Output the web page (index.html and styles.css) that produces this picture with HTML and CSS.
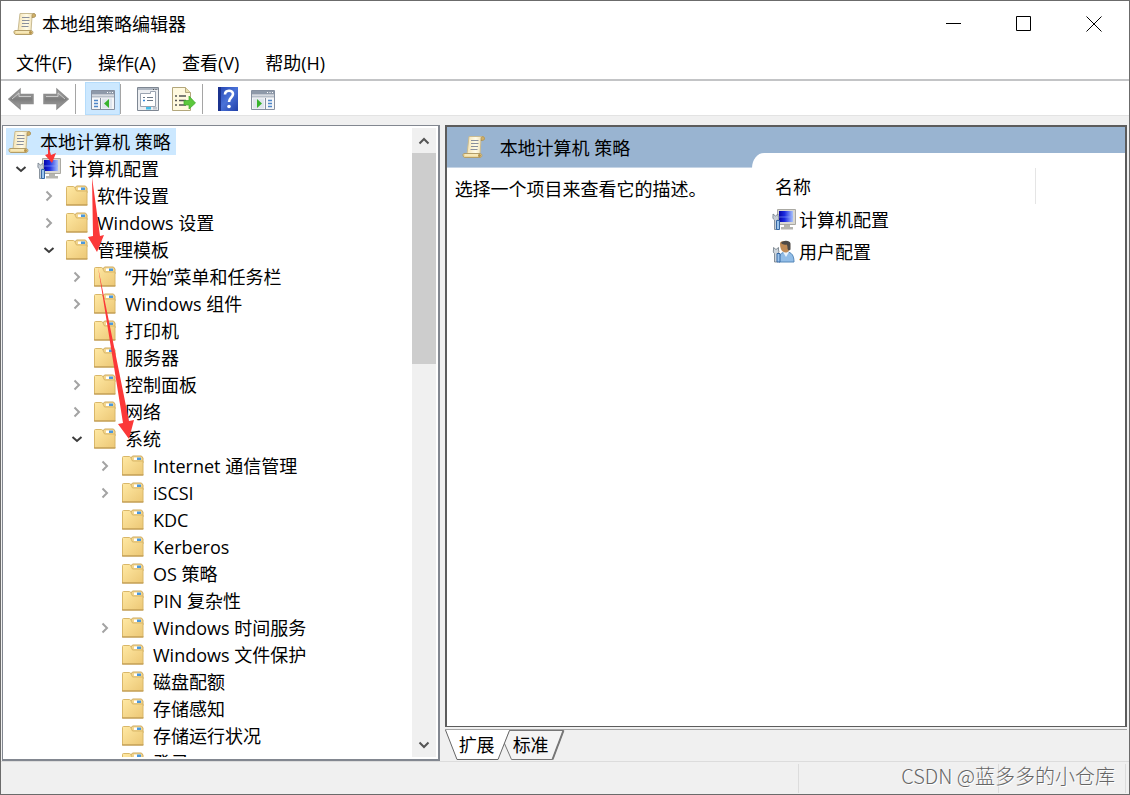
FILE: index.html
```html
<!DOCTYPE html>
<html lang="zh-CN">
<head>
<meta charset="utf-8">
<title>本地组策略编辑器</title>
<link rel="stylesheet" href="styles.css">
</head>
<body>

<svg class="defs" width="0" height="0" aria-hidden="true">
  <defs>
    <linearGradient id="gFolder" x1="0" y1="0" x2="1" y2="1">
      <stop offset="0" stop-color="#ffe9a4"/><stop offset="1" stop-color="#ecc775"/>
    </linearGradient>
    <linearGradient id="gPaper" x1="0" y1="0" x2="1" y2="0">
      <stop offset="0" stop-color="#f4e3b4"/><stop offset=".5" stop-color="#fffbe8"/><stop offset="1" stop-color="#ead49b"/>
    </linearGradient>
    <linearGradient id="gScreen" x1="0" y1="0" x2="1" y2="0">
      <stop offset="0" stop-color="#0505a8"/><stop offset=".4" stop-color="#1c2be0"/><stop offset="1" stop-color="#a9c3fb"/>
    </linearGradient>
    <linearGradient id="gArrow" x1="0" y1="0" x2="0" y2="1">
      <stop offset="0" stop-color="#b5b5b5"/><stop offset=".5" stop-color="#7c7c7c"/><stop offset="1" stop-color="#a5a5a5"/>
    </linearGradient>
    <linearGradient id="gHelp" x1="0" y1="0" x2="1" y2="1">
      <stop offset="0" stop-color="#2343b0"/><stop offset=".5" stop-color="#4a72d8"/><stop offset="1" stop-color="#2140a8"/>
    </linearGradient>
  </defs>
  <symbol id="folder" viewBox="0 0 24 24">
    <path d="M9.500 7.500v-3l2-2.500h9l1.500 2v5H9.500z" fill="#f3d68e" stroke="#cfab61"/>
    <path d="M13 3.500h7v2.500h-7z" fill="#fff"/>
    <path d="M16 3.500h4v2.500h-4z" fill="#4b98dc"/>
    <path d="M1.500 3.500q0-1 1-1h6q1 0 1.500 1.500l1.500 3h10.500v14h-20.500z" fill="url(#gFolder)" stroke="#d9b769"/>
    <path d="M1 21h21.500" stroke="#b8924a"/>
  </symbol>
  <symbol id="scroll" viewBox="0 0 24 24">
    <path d="M7 1.500h14c2 0 2 3.500 0 3.500h-2l-1 14H5z" fill="url(#gPaper)" stroke="#c9bb92"/>
    <path d="M19 5.500V3.500c0-2.500 3.500-2.500 3.500 0 0 1.500-1 2-3.500 2z" fill="#d1b066" stroke="#9d8654" stroke-width=".7"/>
    <path d="M9 5.500h7.500M9 8.500h7.500M9 11.500h7M8.500 14.500h7" stroke="#8a8f9c" stroke-width="1.200"/>
    <path d="M2 18.500h16c2.500 0 2.500 4 0 4H3c-2.500 0-2.500-4-1-4z" fill="#eed99d" stroke="#b39d68"/>
    <path d="M3 20h13" stroke="#fff6d2"/>
    <circle cx="17.500" cy="20.500" r="1.500" fill="#b6924a"/>
  </symbol>
  <symbol id="computer" viewBox="0 0 24 24">
    <path d="M5.500 1.500h18v15h-18z" fill="#d9d8d2" stroke="#aaa9a3"/>
    <path d="M7 3h14v11H7z" fill="url(#gScreen)"/>
    <path d="M7 9h14" stroke="#8fa8ff" stroke-width=".6"/>
    <path d="M12 17h6v2h3v2.500H9V19h3z" fill="#b5b5af"/>
    <path d="M1 8v-2l2.500 2L6 6v2c1.500 2 .5 4-.5 4v9.500h-3V12C1 11 .5 9.500 1 8z" fill="#c7ced6" stroke="#727d8a" stroke-width=".8"/>
    <path d="M4.500 12.500h3v9h-3z" fill="#9cc4ec" stroke="#3768a4"/>
  </symbol>
  <symbol id="user" viewBox="0 0 24 24">
    <path d="M7 22c-.5-7 2-10 7.500-10S22 16 22 22z" fill="#92bde7" stroke="#5587b8"/>
    <path d="M11 12l3 5 3-5z" fill="#e9f3fd"/>
    <path d="M8 3c0-2 8-3 9.500 0 1.500 4 0 9-3 9.500C10 13 8 9 8 3z" fill="#c08a55"/>
    <path d="M9 3c1-3 9-3.500 9.500.5V9.500c-1.500 1.500-2.500 1-3-1 0-2 0-3-1-4-2 .5-4 0-5.500-1.500z" fill="#4f4a47"/>
    <path d="M1.500 10V7.500L4 9.500l2.500-2V10c1 2 0 3-1 3.500V22h-3v-8.500c-1-.5-1.500-2-1-3.500z" fill="#ced5dc" stroke="#6d7883" stroke-width=".8"/>
    <path d="M5 13.500h3V22H5z" fill="#9cc4ec" stroke="#3768a4"/>
  </symbol>
  <symbol id="right" viewBox="0 0 12 12"><path d="M3.500 1.500L8 6l-4.500 4.500" fill="none" stroke="#a3a3a3" stroke-width="2"/></symbol>
  <symbol id="down" viewBox="0 0 12 12"><path d="M1.500 4L6 8l4.500-4" fill="none" stroke="#3c3c3c" stroke-width="2"/></symbol>
</svg>

<div class="window">
  <header class="titlebar">
    <svg class="icon"><use href="#scroll"/></svg>
    <h1>本地组策略编辑器</h1>
    <div class="controls">
      <button aria-label="最小化"><svg width="16" height="16"><path d="M0 7.500h15" stroke="#000"/></svg></button>
      <button aria-label="最大化"><svg width="16" height="16"><path d="M.5.500h14v14H.5z" fill="none" stroke="#000"/></svg></button>
      <button aria-label="关闭"><svg width="16" height="16"><path d="M.5.500l15 15m0-15l-15 15" stroke="#000"/></svg></button>
    </div>
  </header>

  <nav class="menu">
    <button>文件(F)</button>
    <button>操作(A)</button>
    <button>查看(V)</button>
    <button>帮助(H)</button>
  </nav>

  <div class="toolbar">
    <button aria-label="后退"><svg viewBox="0 0 26 26"><path d="M1 13L12 3.500V8.500h13v9H12v5z" fill="url(#gArrow)" stroke="#8d8d8d" stroke-width="1.500"/><path d="M4 13l7-6v3.500h12" fill="none" stroke="#c9c9c9"/></svg></button>
    <button aria-label="前进"><svg viewBox="0 0 26 26"><path d="M25 13L14 3.500V8.500H1v9h13v5z" fill="url(#gArrow)" stroke="#8d8d8d" stroke-width="1.500"/><path d="M3 10.500h12V7l7 6" fill="none" stroke="#c9c9c9"/></svg></button>
    <span class="sep"></span>
    <button class="active" aria-label="显示/隐藏控制台树">
      <svg viewBox="0 0 26 26"><path d="M1.500 4.500h23v19h-23z" fill="#f5f6f8" stroke="#8690a0"/><path d="M2 5h22v3.500H2z" fill="#8e99a9"/><path d="M17 6.500h1m1.500 0h1m1.500 0h1" stroke="#fff"/><path d="M2 10.500h22" stroke="#b6bec9" stroke-width="2"/><path d="M10.500 12v11.500" stroke="#8690a0"/><path d="M4 14.500h4M4 17.500h4M4 20.500h4" stroke="#4e86c8" stroke-width="1.500"/><path d="M12 12.500h10v10H12z" fill="#dfe5ed"/><path d="M19 13v9l-5-4.500z" fill="#38b32c"/></svg>
    </button>
    <span class="sep"></span>
    <button aria-label="属性">
      <svg viewBox="0 0 26 26"><path d="M2.500 1.500h21v23h-21z" fill="#eceef1" stroke="#7e8793"/><path d="M3 2h20v2H3z" fill="#aeb6c1"/><path d="M18 3.500h1m1.500 0h1" stroke="#555"/><path d="M5.500 7.500h10v-2h5v15h-15z" fill="#fff" stroke="#9aa3b0"/><path d="M8 11.500h2m2 0h6M8 14.500h2m2 0h6" stroke="#6b7786" stroke-width="1.200"/><path d="M8 14.500h2" stroke="#3287dd" stroke-width="1.500"/><path d="M11 21h5v2.500h-5z" fill="#45bde9"/><path d="M18 21h4v2.500h-4z" fill="#c1c7cf"/></svg>
    </button>
    <button aria-label="导出列表">
      <svg viewBox="0 0 26 26"><path d="M2.500 1.500h13l5 5v18h-18z" fill="#fff9df" stroke="#b3a77c"/><path d="M15.500 1.500v5h5" fill="#eadfae" stroke="#b3a77c"/><path d="M5 10h2m2 0h7M5 14.500h2m2 0h7M5 19h2m2 0h7" stroke="#545454" stroke-width="1.500"/><path d="M14 14.500h5V10l6.500 7-6.500 6v-4h-5z" fill="#5cc83c" stroke="#3da62d" stroke-width=".7"/></svg>
    </button>
    <span class="sep"></span>
    <button aria-label="帮助">
      <svg viewBox="0 0 26 26"><path d="M3 1h20v24H3z" fill="url(#gHelp)"/><path d="M4.500 1v24" stroke="#1b328e" stroke-width="3"/><path d="M10 8.500c0-5 8-5 8-.5 0 3.500-4 4-4 8" fill="none" stroke="#fff" stroke-width="2.600"/><circle cx="14" cy="20.500" r="1.800" fill="#fff"/></svg>
    </button>
    <button aria-label="显示/隐藏操作窗格">
      <svg viewBox="0 0 26 26"><path d="M1.500 4.500h23v19h-23z" fill="#f5f6f8" stroke="#8690a0"/><path d="M2 5h22v3.500H2z" fill="#8e99a9"/><path d="M17 6.500h1m1.500 0h1m1.500 0h1" stroke="#fff"/><path d="M2 10.500h22" stroke="#b6bec9" stroke-width="2"/><path d="M15.500 12v11.500" stroke="#8690a0"/><path d="M18 14.500h4M18 17.500h4M18 20.500h4" stroke="#4e86c8" stroke-width="1.500"/><path d="M3 12.500h11v10H3z" fill="#dfe5ed"/><path d="M7 13v9l5-4.500z" fill="#38b32c"/></svg>
    </button>
  </div>

  <main class="panes">
    <section class="tree-pane">
      <div class="tree">
        <div class="root"><svg class="icon"><use href="#scroll"/></svg><span>本地计算机 策略</span></div>
        <ul class="top">
          <li>
            <div class="row"><button aria-label="折叠"><svg><use href="#down"/></svg></button><svg class="icon"><use href="#computer"/></svg><span>计算机配置</span></div>
            <ul>
              <li><div class="row"><button aria-label="展开"><svg><use href="#right"/></svg></button><svg class="icon"><use href="#folder"/></svg><span>软件设置</span></div></li>
              <li><div class="row"><button aria-label="展开"><svg><use href="#right"/></svg></button><svg class="icon"><use href="#folder"/></svg><span>Windows 设置</span></div></li>
              <li>
                <div class="row"><button aria-label="折叠"><svg><use href="#down"/></svg></button><svg class="icon"><use href="#folder"/></svg><span>管理模板</span></div>
                <ul>
                  <li><div class="row"><button aria-label="展开"><svg><use href="#right"/></svg></button><svg class="icon"><use href="#folder"/></svg><span>“开始”菜单和任务栏</span></div></li>
                  <li><div class="row"><button aria-label="展开"><svg><use href="#right"/></svg></button><svg class="icon"><use href="#folder"/></svg><span>Windows 组件</span></div></li>
                  <li><div class="row leaf"><svg class="icon"><use href="#folder"/></svg><span>打印机</span></div></li>
                  <li><div class="row leaf"><svg class="icon"><use href="#folder"/></svg><span>服务器</span></div></li>
                  <li><div class="row"><button aria-label="展开"><svg><use href="#right"/></svg></button><svg class="icon"><use href="#folder"/></svg><span>控制面板</span></div></li>
                  <li><div class="row"><button aria-label="展开"><svg><use href="#right"/></svg></button><svg class="icon"><use href="#folder"/></svg><span>网络</span></div></li>
                  <li>
                    <div class="row"><button aria-label="折叠"><svg><use href="#down"/></svg></button><svg class="icon"><use href="#folder"/></svg><span>系统</span></div>
                    <ul>
                      <li><div class="row"><button aria-label="展开"><svg><use href="#right"/></svg></button><svg class="icon"><use href="#folder"/></svg><span>Internet 通信管理</span></div></li>
                      <li><div class="row"><button aria-label="展开"><svg><use href="#right"/></svg></button><svg class="icon"><use href="#folder"/></svg><span>iSCSI</span></div></li>
                      <li><div class="row leaf"><svg class="icon"><use href="#folder"/></svg><span>KDC</span></div></li>
                      <li><div class="row leaf"><svg class="icon"><use href="#folder"/></svg><span>Kerberos</span></div></li>
                      <li><div class="row leaf"><svg class="icon"><use href="#folder"/></svg><span>OS 策略</span></div></li>
                      <li><div class="row leaf"><svg class="icon"><use href="#folder"/></svg><span>PIN 复杂性</span></div></li>
                      <li><div class="row"><button aria-label="展开"><svg><use href="#right"/></svg></button><svg class="icon"><use href="#folder"/></svg><span>Windows 时间服务</span></div></li>
                      <li><div class="row leaf"><svg class="icon"><use href="#folder"/></svg><span>Windows 文件保护</span></div></li>
                      <li><div class="row leaf"><svg class="icon"><use href="#folder"/></svg><span>磁盘配额</span></div></li>
                      <li><div class="row leaf"><svg class="icon"><use href="#folder"/></svg><span>存储感知</span></div></li>
                      <li><div class="row leaf"><svg class="icon"><use href="#folder"/></svg><span>存储运行状况</span></div></li>
                      <li><div class="row leaf"><svg class="icon"><use href="#folder"/></svg><span>登录</span></div></li>
                    </ul>
                  </li>
                </ul>
              </li>
            </ul>
          </li>
        </ul>
        <!-- red pointers over the tree -->
        <svg class="arrows" width="150" height="330" fill="#fb3838">
          <path d="M43 17l3 10 5-2-4 10-7-8 3-1z"/>
          <path d="M87 49l8 59 4-1-7 17-9-15 5-1z"/>
          <path d="M93 139l31 154 5-1-5 19-11-15 5-1z"/>
        </svg>
      </div>
      <div class="scrollbar">
        <button aria-label="向上滚动"><svg viewBox="0 0 12 12"><path d="M1.500 8.500L6 4l4.500 4.500" fill="none" stroke="#555" stroke-width="2"/></svg></button>
        <div class="track"><div class="thumb"></div></div>
        <button aria-label="向下滚动"><svg viewBox="0 0 12 12"><path d="M1.500 3.500L6 8l4.500-4.500" fill="none" stroke="#555" stroke-width="2"/></svg></button>
      </div>
    </section>

    <section class="detail">
      <div class="view">
        <div class="info">
          <h2><svg class="icon"><use href="#scroll"/></svg><span>本地计算机 策略</span></h2>
          <p>选择一个项目来查看它的描述。</p>
        </div>
        <div class="list">
          <div class="list-body">
            <div class="column">名称</div>
            <a href="#"><svg class="icon"><use href="#computer"/></svg>计算机配置</a>
            <a href="#"><svg class="icon"><use href="#user"/></svg>用户配置</a>
          </div>
        </div>
      </div>
      <div class="tabs">
        <svg class="tab-shape" width="122" height="31">
          <path d="M59 12.500L66.500 29.500h41L118.500.500H64z" fill="#f4f4f4" stroke="#777"/>
          <path d="M107.500 29.500L118.500.500" stroke="#777" stroke-width="2"/>
          <path d="M.5 0L12 29.500h41L64.500 0z" fill="#fff"/>
          <path d="M.5 0L12 29.500h41L64.500.500" fill="none" stroke="#666"/>
        </svg>
        <button>扩展</button>
        <button>标准</button>
      </div>
    </section>
  </main>

  <footer class="status">
    <span></span>
    <span></span>
    <span></span>
    <p class="watermark">CSDN @蓝多多的小仓库</p>
  </footer>
</div>

</body>
</html>
```
FILE: styles.css
```css
* {
  box-sizing: border-box;
}

body {
  margin: 0;
  font-family: "Open Sans", "Noto Sans CJK SC", sans-serif;
  font-size: 18px;
  line-height: 27px;
  color: #000;
}

button {
  display: flex;
  align-items: center;
  justify-content: center;
  padding: 0;
  border: 0;
  background: none;
  font: inherit;
  color: inherit;
}

h1, h2, p, ul {
  margin: 0;
  padding: 0;
  font-size: 18px;
  font-weight: normal;
  list-style: none;
}

svg {
  display: block;
}

.defs {
  position: absolute;
}

.icon {
  width: 24px;
  height: 24px;
  flex: none;
}

.window {
  display: flex;
  flex-direction: column;
  height: 100vh;
  border: 1px solid #6b6b6b;
  background: #f0f0f0;
  overflow: hidden;
}

.titlebar {
  display: flex;
  align-items: center;
  height: 46px;
  padding-left: 12px;
  background: #fff;
}

.titlebar h1 {
  flex: 1;
  margin-left: 5px;
}

.controls {
  display: flex;
}

.controls button {
  width: 70px;
  height: 46px;
}

.menu {
  display: flex;
  gap: 26px;
  height: 34px;
  padding: 0 15px;
  background: #fff;
  border-bottom: 2px solid #c3c4c6;
}

.toolbar {
  display: flex;
  align-items: center;
  height: 35px;
  padding: 1px 0 0 2px;
  background: #fff;
  border-bottom: 1px solid #e3e3e3;
}

.toolbar button {
  width: 35px;
  height: 33px;
}

.toolbar button svg {
  width: 26px;
  height: 26px;
}

.toolbar .sep {
  width: 1px;
  height: 30px;
  margin-right: 9px;
  background: #a5a5a5;
}

.toolbar .sep:nth-of-type(1) {
  margin-left: 2px;
}

.toolbar .active {
  background: #cce8ff;
  border: 1px solid #b5dcfb;
}

.toolbar .sep:nth-of-type(3) {
  margin-left: 2px;
  margin-right: 7px;
}

.panes {
  display: flex;
  flex: 1;
  gap: 5px;
  min-height: 0;
  padding: 9px 2px 0 1px;
}

.tree-pane {
  display: flex;
  width: 38.9%;
  padding: 2px;
  border: 1px solid #828790;
  border-width: 1px 2px 2px 1px;
  background: #fff;
}

.tree {
  position: relative;
  flex: 1;
  overflow: hidden;
}

.root {
  display: inline-flex;
  align-items: center;
  gap: 8px;
  height: 27px;
  margin-left: 1px;
  padding: 0 5px 0 2px;
  background: #cce8ff;
  vertical-align: top;
}

.root span,
.row span,
.info h2 span {
  padding-top: 2px;
}

.tree ul {
  padding-left: 28px;
}

.tree .top {
  padding-left: 7px;
}

.row {
  display: flex;
  align-items: center;
  gap: 8px;
  height: 27px;
  white-space: nowrap;
}

.row.leaf {
  padding-left: 25px;
}

.row button {
  width: 17px;
  height: 27px;
}

.row button svg {
  width: 12px;
  height: 12px;
}

.arrows {
  position: absolute;
  left: 0;
  top: 0;
  pointer-events: none;
}

.scrollbar {
  display: flex;
  flex-direction: column;
  width: 24px;
  background: #f0f0f0;
}

.scrollbar button {
  height: 25px;
}

.scrollbar button svg {
  width: 12px;
  height: 12px;
}

.track {
  flex: 1;
}

.thumb {
  height: 36.5%;
  background: #cdcdcd;
}

.detail {
  display: flex;
  flex: 1;
  flex-direction: column;
}

.view {
  display: flex;
  flex: 1;
  border: 2px solid #5c5c5c;
  border-bottom-width: 1px;
  background: #fff;
}

.info {
  width: 45%;
}

.info h2 {
  display: flex;
  align-items: center;
  gap: 14px;
  height: 41px;
  padding-left: 15px;
  background: #99b4d1;
  border-bottom: 1px solid #c5d4e5;
}

.info p {
  padding: 8px;
}

.list {
  display: flex;
  flex: 1;
  padding-top: 26px;
  background: #99b4d1;
}

.list-body {
  flex: 1;
  padding: 15px 20px;
  border-top-left-radius: 12px 15px;
  background: #fff;
}

.column {
  width: 264px;
  height: 36px;
  padding: 6px 3px;
  border-right: 1px solid #e5e5e5;
}

.list a {
  display: flex;
  align-items: center;
  gap: 3px;
  height: 32px;
  color: inherit;
  text-decoration: none;
}

.tabs {
  display: flex;
  position: relative;
  gap: 18px;
  height: 32px;
  margin-top: 2px;
  padding-left: 14px;
  border-top: 1px solid #a5a5a5;
}

.tab-shape {
  position: absolute;
  left: 0;
  top: 0;
}

.tabs button {
  position: relative;
  height: 31px;
}

.status {
  display: flex;
  position: relative;
  height: 33px;
  padding: 2px 3px 1px 0;
  border-top: 1px solid #dcdcdc;
}

.status span {
  flex: 1;
  border-right: 1px solid #dcdcdc;
}

.status span:nth-of-type(2) {
  flex: 0 0 200px;
}

.status span:nth-of-type(3) {
  flex: 0 0 127px;
}

.watermark {
  position: absolute;
  right: 14px;
  top: 0;
  font-family: "Noto Sans CJK SC", sans-serif;
  font-size: 20px;
  font-weight: 300;
  color: #666;
  text-shadow: 1px 1px 0 #fff;
}
```
